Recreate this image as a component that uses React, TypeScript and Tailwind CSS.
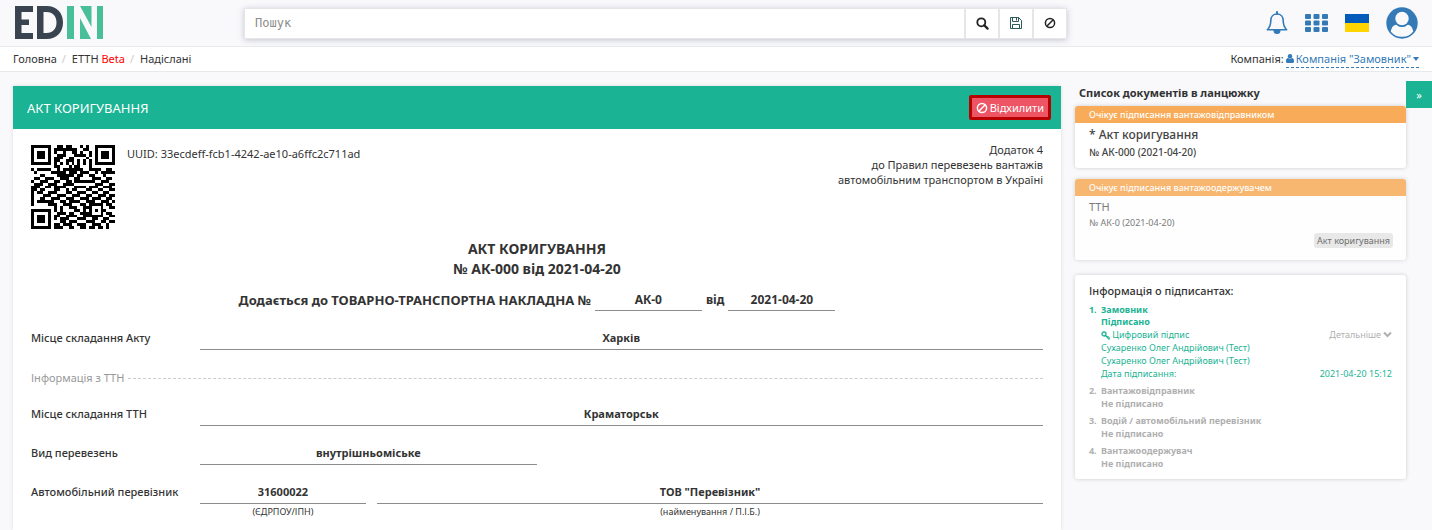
import type { ReactNode } from "react";

const QR_ROWS = [
  "11111110011011000101001111111",
  "10000010111111110011001000001",
  "10111010100100110100101011101",
  "10111010011100011110101011101",
  "10111010111001100001001011101",
  "10000010110011101010101000001",
  "11111110101010101010101111111",
  "00000000110001011000100000000",
  "10111110010111111100111100110",
  "01000001111101110111001011111",
  "00011000011111101100110001000",
  "01100111001110011000011100110",
  "10011100110011011111110011100",
  "01110011100111100000001110011",
  "11100110111100011110111001110",
  "11011000110010110001100110011",
  "10110011100011001110011001100",
  "10001110011100111001100111011",
  "10011001110011100111011100110",
  "10111111001101111001110011101",
  "10000011100111000110111110110",
  "00000000101001110011100010011",
  "11111110101000011010101011000",
  "10000010011101100111100010110",
  "10111010110011110011111110011",
  "10111010101110001110011001100",
  "10111010001101110001110011011",
  "10000010110111001110011100100",
  "11111110111001100110110110100",
];

function QrCode() {
  const cells: ReactNode[] = [];
  QR_ROWS.forEach((row, y) => {
    for (let x = 0; x < row.length; x++) {
      const ring = Math.max(Math.abs(x - 22), Math.abs(y - 22));
      const on = ring <= 2 ? ring !== 1 : row[x] === "1";
      if (on) cells.push(<rect key={`${x}-${y}`} x={x} y={y} width="1" height="1" />);
    }
  });
  return (
    <svg viewBox="0 0 29 29" className="size-[84px] shrink-0" shapeRendering="crispEdges" role="img" aria-label="QR">
      {cells}
    </svg>
  );
}

function Logo() {
  return (
    <svg width="90" height="33" viewBox="0 0 90 33" role="img" aria-label="EDIN">
      <g fill="#3a4350">
        <path d="M0 0h18v6H6.500v7.500H14v5.500H6.500v8H18v6H0z" />
        <path fillRule="evenodd" d="M22 0h9.500C42 0 48 7 48 16.500S42 33 31.500 33H22zM28.500 6v21h3c6.500 0 10-4.500 10-10.500S38 6 31.500 6z" />
      </g>
      <g fill="#48bf97">
        <path d="M52 0h7v33h-7z" />
        <path d="M65 0h11.500v21z" />
        <path d="M65 12l11 21H65z" />
        <path d="M82 0h6v33h-6z" />
      </g>
    </svg>
  );
}

function BanIcon() {
  return (
    <svg width="12" height="12" viewBox="0 0 12 12" fill="none" stroke="currentColor" strokeWidth="1.500" aria-hidden="true">
      <circle cx="6" cy="6" r="4.600" />
      <path d="M2.800 9.200l6.400-6.400" />
    </svg>
  );
}

function SearchIcon() {
  return (
    <svg width="13" height="13" viewBox="0 0 13 13" fill="none" stroke="currentColor" aria-hidden="true">
      <circle cx="5.300" cy="5.300" r="4" strokeWidth="1.800" />
      <path d="M8.400 8.400l3.200 3.200" strokeWidth="2.200" strokeLinecap="round" />
    </svg>
  );
}

function SaveIcon() {
  return (
    <svg width="12" height="12" viewBox="0 0 12 12" fill="none" stroke="#2c5a58" aria-hidden="true">
      <path d="M.5.500h8L11.500 3.500v8H.500z" />
      <path d="M2.500.500v4h6v-4" />
      <path d="M6.500 1v2.500" />
      <path d="M2.500 11.500v-4h7v4" />
    </svg>
  );
}

function BellIcon() {
  return (
    <svg width="22" height="24" viewBox="0 0 22 24" fill="none" stroke="#337ab7" strokeWidth="1.600" aria-hidden="true">
      <path d="M11 3c-4 0-6.200 3-6.200 6.500 0 5-1.300 7.200-3.500 9.300h19.400c-2.200-2.100-3.500-4.300-3.500-9.300C17.200 6 15 3 11 3z" strokeLinejoin="round" />
      <path d="M11 1v2" strokeWidth="2" strokeLinecap="round" />
      <path d="M8.300 19.500a2.700 2.700 0 0 0 5.400 0z" fill="#337ab7" />
    </svg>
  );
}

function GridIcon() {
  return (
    <svg width="23" height="18" viewBox="0 0 23 18" fill="#337ab7" aria-hidden="true">
      {[0, 6.5, 13].map((y) => [0, 8.5, 17].map((x) => <rect key={`${x}-${y}`} x={x} y={y} width="6" height="5" rx="1" />))}
    </svg>
  );
}

function FlagIcon() {
  return (
    <svg width="24" height="18" viewBox="0 0 24 18" aria-hidden="true">
      <path fill="#005bbb" d="M0 0h24v9H0z" />
      <path fill="#ffd500" d="M0 9h24v9H0z" />
    </svg>
  );
}

function AvatarIcon() {
  return (
    <svg width="32" height="32" viewBox="0 0 32 32" aria-hidden="true">
      <circle cx="16" cy="16" r="15.700" fill="#337ab7" />
      <path d="M4.700 24.500c.8-4.200 2.800-6.500 5.700-7a7.800 7.800 0 0 0 11.200 0c2.900.5 4.900 2.800 5.700 7A13.700 13.700 0 0 1 16 29.700a13.700 13.700 0 0 1-11.300-5.200z" fill="#f9f9fc" />
      <circle cx="16" cy="12" r="8" fill="#337ab7" />
      <circle cx="16" cy="11.500" r="6.700" fill="#f9f9fc" />
    </svg>
  );
}

function PersonIcon() {
  return (
    <svg width="8" height="9" viewBox="0 0 8 9" fill="currentColor" className="inline-block" aria-hidden="true">
      <circle cx="4" cy="2.300" r="2.200" />
      <path d="M2 4c.6.500 1.200.8 2 .8S5.400 4.500 6 4c1.500.2 2 1.600 2 3.200C8 8.300 7.400 9 6.500 9h-5C.6 9 0 8.300 0 7.200 0 5.600.5 4.200 2 4z" />
    </svg>
  );
}

function KeyIcon() {
  return (
    <svg width="9" height="9" viewBox="0 0 9 9" fill="none" stroke="currentColor" strokeWidth="1.300" className="inline-block" aria-hidden="true">
      <circle cx="3" cy="3" r="2" />
      <path d="M4.500 4.500l4 4M6 6.500l1.400-1.400M7.300 8l1.500-1.500" />
    </svg>
  );
}

const iconButton = "flex w-[34px] items-center justify-center border-l-2 border-[#e5e6e7] text-[#222]";
const panel = "rounded-[3px] bg-white shadow-[0_0_4px_rgba(0,0,0,0.18)]";

function Value({ children, className = "" }: { children: ReactNode; className?: string }) {
  return <div className={`border-b border-[#8c8c8c] pb-[3px] text-center font-bold ${className}`}>{children}</div>;
}

function Row({ label, children }: { label: string; children: ReactNode }) {
  return (
    <div className="grid grid-cols-[1fr_5fr]">
      <dt className="font-medium">{label}</dt>
      <dd>{children}</dd>
    </div>
  );
}

function Pending({ role }: { role: string }) {
  return (
    <li className="mt-1 pl-[2px] font-bold text-[#b0b0b0]">
      {role}
      <div>Не підписано</div>
    </li>
  );
}

export default function App() {
  return (
    <div className="flex min-h-screen flex-col bg-[#f9f9fc] font-['Noto_Sans','Open_Sans',sans-serif] text-[11px] leading-4 text-[#333]">
      <header className="flex h-[47px] items-center border-b border-[#e7eaec] pr-[14px] pl-[15px]">
        <a href="#" className="w-[229px] shrink-0 pb-px">
          <Logo />
        </a>
        <form className="flex h-[31px] min-w-0 flex-1 border border-[#e5e6e7] bg-white shadow-[0_1px_6px_rgba(60,60,100,0.28)]">
          <input
            type="text"
            aria-label="Пошук"
            placeholder="Пошук"
            className="min-w-0 flex-1 px-[10px] font-['DejaVu_Sans_Mono',monospace] text-[12px] outline-none placeholder:text-[#8c8c8c]"
          />
          <button type="button" aria-label="Шукати" className={iconButton}><SearchIcon /></button>
          <button type="button" aria-label="Зберегти" className={iconButton}><SaveIcon /></button>
          <button type="button" aria-label="Очистити" className={iconButton}><BanIcon /></button>
        </form>
        <div className="flex w-[351px] shrink-0 items-center justify-end gap-[17px]">
          <button type="button" aria-label="Сповіщення"><BellIcon /></button>
          <button type="button" aria-label="Сервіси"><GridIcon /></button>
          <button type="button" aria-label="Мова"><FlagIcon /></button>
          <button type="button" aria-label="Профіль"><AvatarIcon /></button>
        </div>
      </header>

      <nav className="flex h-[25px] items-center justify-between border-b border-[#e7eaec] bg-white px-[13px]">
        <ol className="flex">
          <li><a href="#">Головна</a></li>
          <li className="px-[5px] text-[#ccc]">/</li>
          <li className="pl-px"><a href="#">ЕТТН <span className="text-[#f00]">Beta</span></a></li>
          <li className="px-[5px] text-[#ccc]">/</li>
          <li className="pl-px"><a href="#">Надіслані</a></li>
        </ol>
        <div className="flex gap-[2px]">
          Компанія:
          <button type="button" className="flex items-center gap-[2px] border-b border-dashed border-[#337ab7] text-[#337ab7]">
            <PersonIcon />
            <span>Компанія "Замовник"</span>
            <svg width="6" height="4" viewBox="0 0 6 4" fill="currentColor" aria-hidden="true"><path d="M0 0h6L3 4z" /></svg>
          </button>
        </div>
      </nav>

      <div className="flex flex-1 items-start pl-[13px]">
        <main className="mt-[14px] min-w-0 flex-1 self-stretch bg-white shadow-[0_0_4px_rgba(0,0,0,0.12)]">
          <div className="flex h-[43px] items-center justify-between bg-[#1ab394] pr-[10px] pl-[14px] text-white">
            <h1 className="text-[13px]">АКТ КОРИГУВАННЯ</h1>
            <button type="button" className="flex h-[25px] items-center gap-[2px] rounded-[2px] border-3 border-[#b90000] bg-[#ed5565] px-1">
              <BanIcon />
              Відхилити
            </button>
          </div>

          <div className="px-[18px] pt-[13px]">
            <div className="flex justify-between">
              <div className="flex gap-3 pt-[3px]">
                <QrCode />
                <p className="pt-px">UUID: 33ecdeff-fcb1-4242-ae10-a6ffc2c711ad</p>
              </div>
              <p className="text-right leading-[15px]">
                Додаток 4<br />
                до Правил перевезень вантажів<br />
                автомобільним транспортом в Україні
              </p>
            </div>

            <h2 className="mt-[10px] text-center text-[14px] leading-5 font-bold">
              АКТ КОРИГУВАННЯ<br />№ АК-000 від 2021-04-20
            </h2>

            <div className="mt-[11px] flex justify-center gap-1 text-[12px] leading-5 font-bold">
              <span className="text-[13px]">Додається до ТОВАРНО-ТРАНСПОРТНА НАКЛАДНА №</span>
              <span className="w-[107px] border-b border-[#8c8c8c] text-center">АК-0</span>
              <span>від</span>
              <span className="w-[107px] border-b border-[#8c8c8c] text-center">2021-04-20</span>
            </div>

            <dl className="mt-[19px]">
              <Row label="Місце складання Акту"><Value>Харків</Value></Row>
              <div className="my-5 flex items-center gap-1 text-[#999]">
                Інформація з ТТН
                <span className="flex-1 border-t border-dashed border-[#ccc]" />
              </div>
              <div className="flex flex-col gap-[19px]">
                <Row label="Місце складання ТТН"><Value>Краматорськ</Value></Row>
                <Row label="Вид перевезень"><Value className="w-2/5">внутрішньоміське</Value></Row>
                <Row label="Автомобільний перевізник">
                  <div className="grid grid-cols-[1fr_4fr] gap-[11px]">
                    <div>
                      <Value>31600022</Value>
                      <p className="text-center text-[9px]">(ЄДРПОУ/ІПН)</p>
                    </div>
                    <div>
                      <Value>ТОВ "Перевізник"</Value>
                      <p className="text-center text-[9px]">(найменування / П.І.Б.)</p>
                    </div>
                  </div>
                </Row>
              </div>
            </dl>
          </div>
        </main>

        <aside className="mt-[13px] ml-[14px] w-[331px] shrink-0">
          <h2 className="pl-1 font-bold">Список документів в ланцюжку</h2>
          <section className={`mt-[5px] h-[62px] overflow-hidden ${panel}`}>
            <p className="bg-[#f8ac59] pl-[14px] text-[9px] leading-[17px] font-medium text-white">Очікує підписання вантажовідправником</p>
            <h3 className="mt-1 pl-[14px] text-[12px] font-medium text-[#444]">* Акт коригування</h3>
            <p className="mt-px pl-[14px] text-[10px] font-medium text-[#444]">№ АК-000 (2021-04-20)</p>
          </section>
          <section className={`mt-[11px] h-[81px] overflow-hidden opacity-85 ${panel}`}>
            <p className="bg-[#f8ac59] pl-[14px] text-[9px] leading-[17px] font-medium text-white">Очікує підписання вантажоодержувачем</p>
            <h3 className="mt-[3px] pl-[14px] text-[#666]">ТТН</h3>
            <p className="pl-[14px] text-[9px] text-[#666]">№ АК-0 (2021-04-20)</p>
            <div className="mt-[2px] flex justify-end pr-[13px]">
              <span className="rounded-[3px] bg-[#e6e6e6] px-[3px] text-[9px] leading-[15px] text-[#555]">Акт коригування</span>
            </div>
          </section>
          <section className={`mt-[15px] px-[14px] pt-2 pb-[9px] ${panel}`}>
            <h2 className="mb-1 font-medium">Інформація о підписантах:</h2>
            <ol className="list-outside list-decimal pl-[10px] text-[9px] leading-[13px]">
              <li className="pl-[2px] text-[#1ab394] marker:font-bold">
                <b>Замовник</b>
                <div className="-mt-px font-bold">Підписано</div>
                <div className="flex justify-between">
                  <span><KeyIcon /> Цифровий підпис</span>
                  <button type="button" className="flex items-center gap-[2px] text-[#b0b0b0]">
                    Детальніше
                    <svg width="9" height="7" viewBox="0 0 9 7" fill="none" stroke="currentColor" strokeWidth="2" aria-hidden="true"><path d="M1 1.500l3.500 3.500L8 1.500" /></svg>
                  </button>
                </div>
                <div>Сухаренко Олег Андрійович (Тест)</div>
                <div>Сухаренко Олег Андрійович (Тест)</div>
                <div className="flex justify-between"><span>Дата підписання:</span><span>2021-04-20 15:12</span></div>
              </li>
              <Pending role="Вантажовідправник" />
              <Pending role="Водій / автомобільний перевізник" />
              <Pending role="Вантажоодержувач" />
            </ol>
          </section>
        </aside>
        <button type="button" aria-label="Згорнути панель" className="mt-[9px] h-[27px] w-[26px] shrink-0 bg-[#1ab394] text-white">»</button>
      </div>
    </div>
  );
}
